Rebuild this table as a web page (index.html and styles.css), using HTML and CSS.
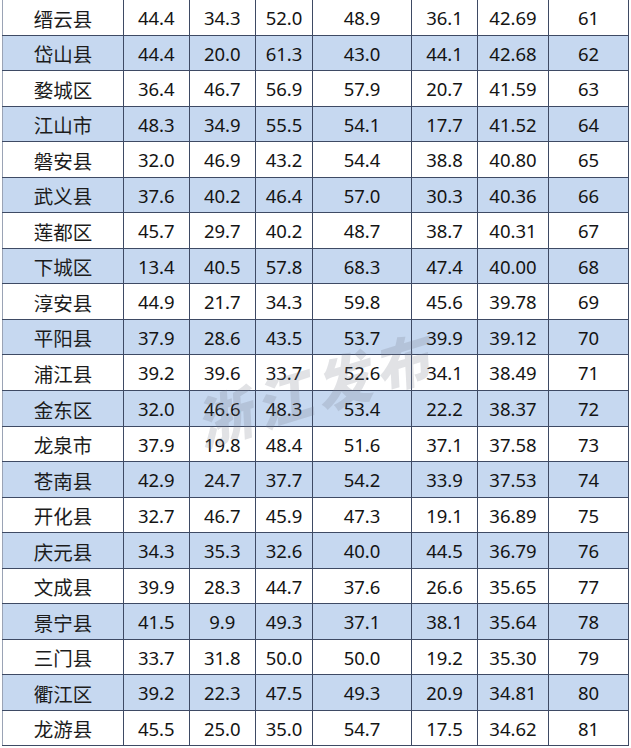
FILE: index.html
```html
<!DOCTYPE html>
<html lang="zh-CN">
<head>
<meta charset="utf-8">
<title>排名表</title>
<link rel="stylesheet" href="styles.css">
</head>
<body>
<div class="sheet">
<table class="rank">
<colgroup>
<col class="c-name"><col class="c-a"><col class="c-b"><col class="c-c"><col class="c-d"><col class="c-e"><col class="c-f"><col class="c-g">
</colgroup>
<tbody>
<tr><td class="name">缙云县</td><td>44.4</td><td>34.3</td><td>52.0</td><td>48.9</td><td>36.1</td><td>42.69</td><td>61</td></tr>
<tr class="alt"><td class="name">岱山县</td><td>44.4</td><td>20.0</td><td>61.3</td><td>43.0</td><td>44.1</td><td>42.68</td><td>62</td></tr>
<tr><td class="name">婺城区</td><td>36.4</td><td>46.7</td><td>56.9</td><td>57.9</td><td>20.7</td><td>41.59</td><td>63</td></tr>
<tr class="alt"><td class="name">江山市</td><td>48.3</td><td>34.9</td><td>55.5</td><td>54.1</td><td>17.7</td><td>41.52</td><td>64</td></tr>
<tr><td class="name">磐安县</td><td>32.0</td><td>46.9</td><td>43.2</td><td>54.4</td><td>38.8</td><td>40.80</td><td>65</td></tr>
<tr class="alt"><td class="name">武义县</td><td>37.6</td><td>40.2</td><td>46.4</td><td>57.0</td><td>30.3</td><td>40.36</td><td>66</td></tr>
<tr><td class="name">莲都区</td><td>45.7</td><td>29.7</td><td>40.2</td><td>48.7</td><td>38.7</td><td>40.31</td><td>67</td></tr>
<tr class="alt"><td class="name">下城区</td><td>13.4</td><td>40.5</td><td>57.8</td><td>68.3</td><td>47.4</td><td>40.00</td><td>68</td></tr>
<tr><td class="name">淳安县</td><td>44.9</td><td>21.7</td><td>34.3</td><td>59.8</td><td>45.6</td><td>39.78</td><td>69</td></tr>
<tr class="alt"><td class="name">平阳县</td><td>37.9</td><td>28.6</td><td>43.5</td><td>53.7</td><td>39.9</td><td>39.12</td><td>70</td></tr>
<tr><td class="name">浦江县</td><td>39.2</td><td>39.6</td><td>33.7</td><td>52.6</td><td>34.1</td><td>38.49</td><td>71</td></tr>
<tr class="alt"><td class="name">金东区</td><td>32.0</td><td>46.6</td><td>48.3</td><td>53.4</td><td>22.2</td><td>38.37</td><td>72</td></tr>
<tr><td class="name">龙泉市</td><td>37.9</td><td>19.8</td><td>48.4</td><td>51.6</td><td>37.1</td><td>37.58</td><td>73</td></tr>
<tr class="alt"><td class="name">苍南县</td><td>42.9</td><td>24.7</td><td>37.7</td><td>54.2</td><td>33.9</td><td>37.53</td><td>74</td></tr>
<tr><td class="name">开化县</td><td>32.7</td><td>46.7</td><td>45.9</td><td>47.3</td><td>19.1</td><td>36.89</td><td>75</td></tr>
<tr class="alt"><td class="name">庆元县</td><td>34.3</td><td>35.3</td><td>32.6</td><td>40.0</td><td>44.5</td><td>36.79</td><td>76</td></tr>
<tr><td class="name">文成县</td><td>39.9</td><td>28.3</td><td>44.7</td><td>37.6</td><td>26.6</td><td>35.65</td><td>77</td></tr>
<tr class="alt"><td class="name">景宁县</td><td>41.5</td><td>9.9</td><td>49.3</td><td>37.1</td><td>38.1</td><td>35.64</td><td>78</td></tr>
<tr><td class="name">三门县</td><td>33.7</td><td>31.8</td><td>50.0</td><td>50.0</td><td>19.2</td><td>35.30</td><td>79</td></tr>
<tr class="alt"><td class="name">衢江区</td><td>39.2</td><td>22.3</td><td>47.5</td><td>49.3</td><td>20.9</td><td>34.81</td><td>80</td></tr>
<tr><td class="name">龙游县</td><td>45.5</td><td>25.0</td><td>35.0</td><td>54.7</td><td>17.5</td><td>34.62</td><td>81</td></tr>
</tbody>
</table>
<div class="watermark">浙江发布</div>
</div>
</body>
</html>
```
FILE: styles.css
```css
html, body {
  margin: 0;
  padding: 0;
  background: #ffffff;
}

.sheet {
  position: relative;
  width: 631px;
  height: 748px;
  overflow: hidden;
}

.rank {
  margin: -1px 0 0 2px;
  width: 626px;
  table-layout: fixed;
  border-collapse: collapse;
  font-family: "Noto Sans", "Noto Sans CJK SC", sans-serif;
  font-size: 18.5px;
  color: #141414;
}

.c-name { width: 121px; }
.c-a { width: 65.5px; }
.c-b { width: 66.5px; }
.c-c { width: 57px; }
.c-d { width: 99px; }
.c-e { width: 66px; }
.c-f { width: 71px; }
.c-g { width: 80px; }

.rank td {
  height: 35.55px;
  padding: 2px 0 0 0;
  box-sizing: border-box;
  border: 1px solid #3e4a64;
  text-align: center;
  vertical-align: middle;
  line-height: 1;
  white-space: nowrap;
}

.rank td.name {
  font-family: "Noto Sans CJK SC", sans-serif;
  font-size: 19.5px;
  color: #1c1c1c;
  border-left-color: #9aa3b5;
}

.rank tr.alt td {
  background: #c6d8f0;
}

.watermark {
  position: absolute;
  left: 196px;
  top: 345px;
  font-family: "Noto Sans CJK SC", sans-serif;
  font-weight: 900;
  font-size: 56px;
  letter-spacing: 6px;
  color: rgba(120, 124, 135, 0.22);
  transform: rotate(-17deg) skewX(-14deg);
  transform-origin: center;
  pointer-events: none;
  white-space: nowrap;
}
```
